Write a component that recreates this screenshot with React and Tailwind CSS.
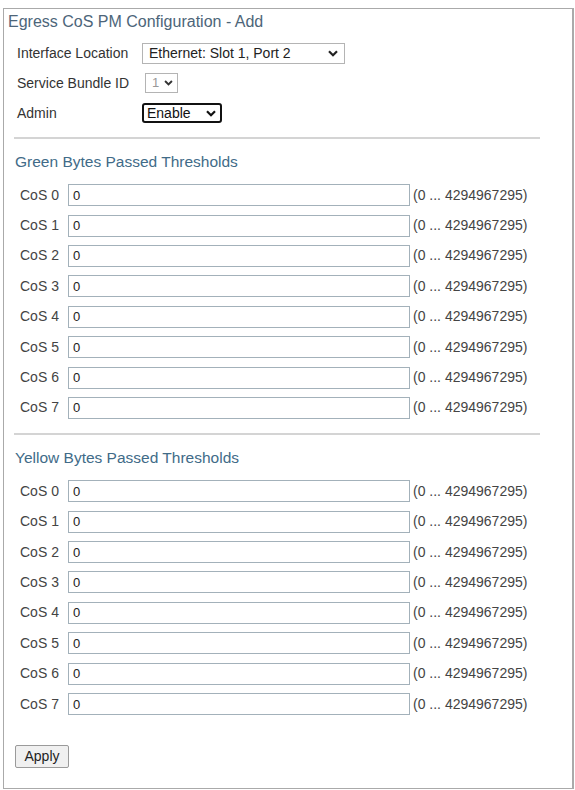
import React from "react";

const COS_ROWS = [0, 1, 2, 3, 4, 5, 6, 7];

const Chevron = ({ className = "" }) => (
  <svg viewBox="0 0 10 7" className={className} fill="none">
    <path d="M1 1.2 L5 5.2 L9 1.2" stroke="currentColor" strokeWidth="2.2" />
  </svg>
);

const FormRow = ({ label, children }) => (
  <div className="flex h-[30px] items-center pl-[9px]">
    <span className="w-[125px] text-[14px] text-[#333]">{label}</span>
    {children}
  </div>
);

const ThresholdSection = ({ title }) => (
  <div>
    <div className="ml-[6px] h-[2px] w-[526px] bg-[#d4d4d4]" />
    <h2 className="mt-[14px] pl-[7px] text-[15.5px] leading-[18px] text-[#416b88]">
      {title}
    </h2>
    <div className="mt-[9px]">
      {COS_ROWS.map((cos) => (
        <div key={cos} className="flex h-[30.4px] items-center pl-[12px]">
          <span className="w-[48px] text-[14px] text-[#444]">CoS {cos}</span>
          <input
            type="text"
            defaultValue="0"
            className="h-[22px] w-[342px] border border-[#a3b1ba] bg-white px-[4px] text-[13px] text-[#222] outline-none"
          />
          <span className="ml-[3px] text-[14px] text-[#444]">
            (0 ... 4294967295)
          </span>
        </div>
      ))}
    </div>
  </div>
);

export default function App() {
  return (
    <div className="min-h-[790px] bg-white pt-[8px] pl-[3px] font-['Liberation_Sans',Arial,sans-serif]">
      <div className="h-[781px] w-[571px] border border-r-2 border-[#aaaaaa] px-[4px]">
        <div className="h-[29px] pt-[4px]">
          <h1 className="text-[16px] leading-[18px] text-[#4d6579]">
            Egress CoS PM Configuration - Add
          </h1>
        </div>

        <FormRow label="Interface Location">
          <div className="flex h-[21px] w-[203px] items-center justify-between border border-[#b4b4b4] bg-white pl-[6px] pr-[6px] text-[14px] text-[#222]">
            <span>Ethernet: Slot 1, Port 2</span>
            <Chevron className="h-[7px] w-[10px] text-[#222]" />
          </div>
        </FormRow>

        <FormRow label="Service Bundle ID">
          <div className="ml-[3px] flex h-[20px] w-[33px] items-center justify-between border border-[#b4b4b4] bg-white pl-[6px] pr-[4px] text-[13px] text-[#999]">
            <span>1</span>
            <Chevron className="h-[6px] w-[9px] text-[#333]" />
          </div>
        </FormRow>

        <FormRow label="Admin">
          <div className="flex h-[20px] w-[80px] items-center justify-between rounded-[3px] border-2 border-[#111] bg-white pl-[3px] pr-[4px] text-[14px] text-[#111]">
            <span>Enable</span>
            <Chevron className="h-[7px] w-[10px] text-[#111]" />
          </div>
        </FormRow>

        <div className="mt-[9px]">
          <ThresholdSection title="Green Bytes Passed Thresholds" />
        </div>

        <div className="mt-[10px]">
          <ThresholdSection title="Yellow Bytes Passed Thresholds" />
        </div>

        <button
          type="button"
          className="mt-[26px] ml-[7px] h-[23px] w-[54px] rounded-[2px] border border-[#9a9a9a] bg-[#f0f0f0] text-[14px] text-[#222]"
        >
          Apply
        </button>
      </div>
    </div>
  );
}
